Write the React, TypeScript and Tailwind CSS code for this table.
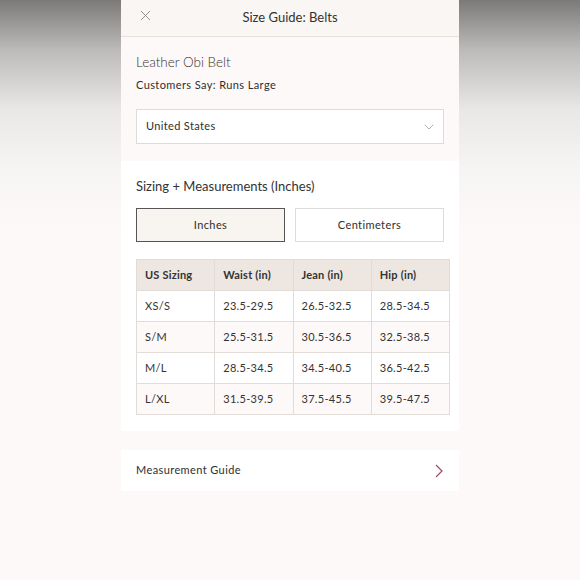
import { ChevronDown, X } from "lucide-react";

const rows = [
  { size: "XS/S", waist: "23.5-29.5", jean: "26.5-32.5", hip: "28.5-34.5" },
  { size: "S/M", waist: "25.5-31.5", jean: "30.5-36.5", hip: "32.5-38.5" },
  { size: "M/L", waist: "28.5-34.5", jean: "34.5-40.5", hip: "36.5-42.5" },
  { size: "L/XL", waist: "31.5-39.5", jean: "37.5-45.5", hip: "39.5-47.5" },
];

const headers = ["US Sizing", "Waist (in)", "Jean (in)", "Hip (in)"];

export default function App() {
  return (
    <div
      className="h-[580px] w-[580px] overflow-hidden bg-[linear-gradient(to_bottom,#7c7a79_0px,#bdbbba_50px,#e9e8e7_110px,#f7f5f4_170px,#fdf9f8_240px)] text-[#333]"
      style={{ fontFamily: "Lato, 'Open Sans', sans-serif" }}
    >
      <div className="mx-auto flex w-[338px] flex-col">
        {/* header */}
        <div className="relative flex h-[37px] items-center justify-center border-b border-[#e6e1dd] bg-[#f9f6f3]">
          <X className="absolute left-[16px] top-[7px] h-[17px] w-[17px] text-[#777]" strokeWidth={1.1} />
          <span className="text-[13px] text-[#333]">Size Guide: Belts</span>
        </div>

        {/* product */}
        <div className="flex flex-col bg-[#fdf9f8] px-[15px] pb-[17px] pt-[15px]">
          <p className="text-[13.5px] font-light leading-[20px] text-[#333]">Leather Obi Belt</p>
          <p className="mt-[5px] text-[11px] leading-[16px] tracking-[0.4px] text-[#2e2e2e]">
            Customers Say: Runs Large
          </p>
          <div className="mt-[16px] flex h-[35px] items-center justify-between border border-[#dcdcdc] bg-white pl-[9px] pr-[6px]">
            <span className="text-[11px] tracking-[0.35px] text-[#2e2e2e]">United States</span>
            <ChevronDown className="h-[16px] w-[16px] text-[#888]" strokeWidth={1} />
          </div>
        </div>

        {/* sizing */}
        <div className="flex flex-col bg-white px-[15px] pb-[16px] pt-[15px]">
          <p className="text-[13px] leading-[20px] text-[#333]">Sizing + Measurements (Inches)</p>
          <div className="mt-[12px] grid grid-cols-2 gap-[10px]">
            <div className="flex h-[34px] items-center justify-center border border-[#555] bg-[#f8f4f0] text-[11px] tracking-[0.4px] text-[#2e2e2e]">
              Inches
            </div>
            <div className="flex h-[34px] items-center justify-center border border-[#dcdcdc] bg-white text-[11px] tracking-[0.4px] text-[#2e2e2e]">
              Centimeters
            </div>
          </div>
          <table className="mt-[17px] w-[314px] table-fixed border-collapse text-[11px] text-[#333]">
            <thead>
              <tr className="h-[31px] bg-[#ede6e1]">
                {headers.map((h) => (
                  <th key={h} className="border border-[#e2dcd9] pl-[8px] text-left font-bold tracking-[0.2px]">
                    {h}
                  </th>
                ))}
              </tr>
            </thead>
            <tbody>
              {rows.map((r, i) => (
                <tr key={r.size} className={i % 2 === 0 ? "h-[31px] bg-white" : "h-[31px] bg-[#fdf9f8]"}>
                  {[r.size, r.waist, r.jean, r.hip].map((v, j) => (
                    <td key={j} className="border border-[#e2dcd9] pl-[8px] tracking-[0.3px]">
                      {v}
                    </td>
                  ))}
                </tr>
              ))}
            </tbody>
          </table>
        </div>

        {/* measurement guide */}
        <div className="mt-[19px] flex h-[41px] items-center justify-between bg-white pl-[15px] pr-[16px]">
          <span className="text-[11px] tracking-[0.4px] text-[#2e2e2e]">Measurement Guide</span>
          <svg width="8" height="14" viewBox="0 0 8 14" fill="none" className="text-[#9b4a6b]">
            <path d="M1 1l6 6-6 6" stroke="currentColor" strokeWidth="1.2" />
          </svg>
        </div>
      </div>
    </div>
  );
}
